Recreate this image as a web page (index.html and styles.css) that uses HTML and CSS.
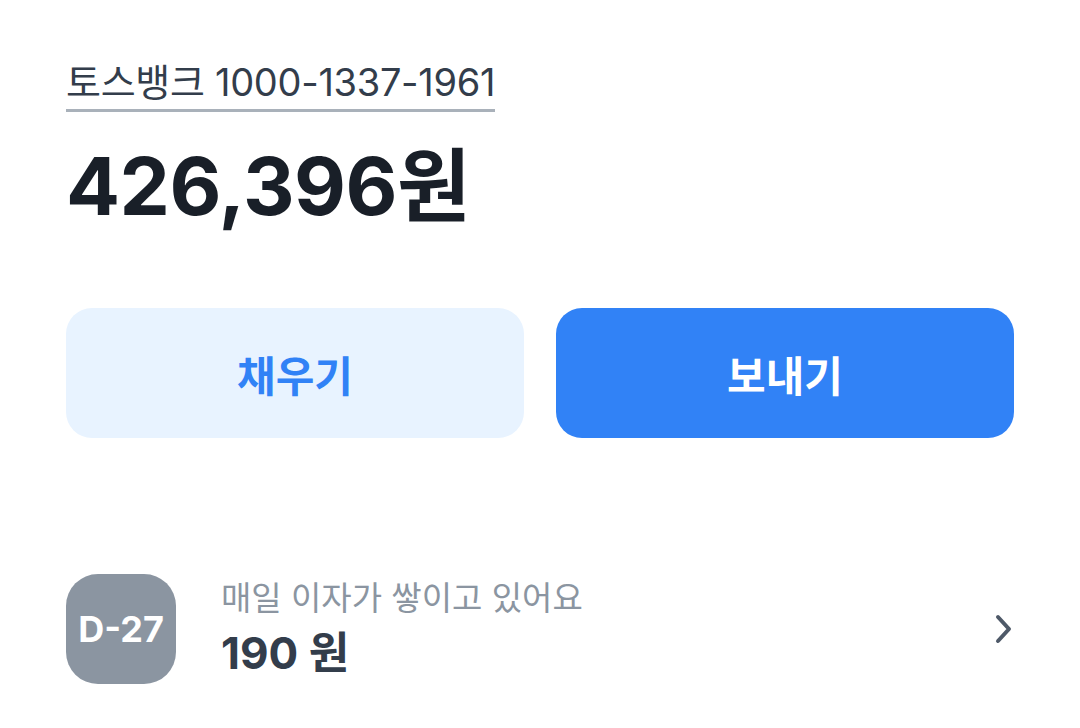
FILE: index.html
```html
<!DOCTYPE html>
<html lang="ko">
<head>
    <meta charset="UTF-8">
    <meta name="viewport" content="width=device-width, initial-scale=1.0">
    <title>토스뱅크 통장</title>
    <link rel="stylesheet" href="styles.css">
</head>
<body>
    <div class="account">
        <div class="account-top">
            <span class="account-name">토스뱅크 1000-1337-1961</span>
        </div>
        <div class="balance">426,396원</div>

        <div class="actions">
            <button class="btn btn-light">채우기</button>
            <button class="btn btn-primary">보내기</button>
        </div>

        <!-- 이자 -->
        <div class="interest">
            <div class="dday">D-27</div>
            <div class="interest-text">
                <div class="interest-label">매일 이자가 쌓이고 있어요</div>
                <div class="interest-amount">190 원</div>
            </div>
            <svg class="chevron" width="20" height="32" viewBox="0 0 20 32">
                <path d="M4 4 L15 16 L4 28" fill="none" stroke="#4e5968" stroke-width="4" stroke-linecap="round" stroke-linejoin="round"/>
            </svg>
        </div>
    </div>
</body>
</html>
```

FILE: styles.css
```css
body {
    margin: 0;
    background-color: #fff;
    font-family: 'Inter', 'Noto Sans CJK KR', sans-serif;
    color: #191f28;
}

.account {
    padding: 58px 66px 0 66px;
}

.account-top {
    display: flex;
}

.account-name {
    font-size: 38px;
    color: #333d4b;
    letter-spacing: -0.3px;
    line-height: 48px;
    border-bottom: 3px solid #a9b1ba;
    padding-bottom: 3px;
}

.balance {
    margin-top: 24px;
    font-size: 80px;
    font-weight: 700;
    letter-spacing: -0.5px;
    line-height: 100px;
    color: #191f28;
}

.actions {
    display: flex;
    gap: 32px;
    margin-top: 72px;
}

.btn {
    flex: 1;
    height: 130px;
    border: none;
    border-radius: 26px;
    font-family: 'Noto Sans CJK KR', sans-serif;
    font-size: 42px;
    font-weight: 600;
}

.btn-light {
    background-color: #e8f3ff;
    color: #3182f6;
}

.btn-primary {
    background-color: #3182f6;
    color: #fff;
}

.interest {
    display: flex;
    align-items: center;
    margin-top: 136px;
}

.dday {
    width: 110px;
    height: 110px;
    border-radius: 32px;
    background-color: #8b95a1;
    color: #fff;
    font-size: 36px;
    font-weight: 700;
    display: flex;
    align-items: center;
    justify-content: center;
}

.interest-text {
    flex: 1;
    margin-left: 45px;
}

.interest-label {
    font-size: 33px;
    color: #8b95a1;
    line-height: 42px;
}

.interest-amount {
    font-size: 44px;
    font-weight: 700;
    color: #333d4b;
    line-height: 56px;
    margin-top: 6px;
}
```
